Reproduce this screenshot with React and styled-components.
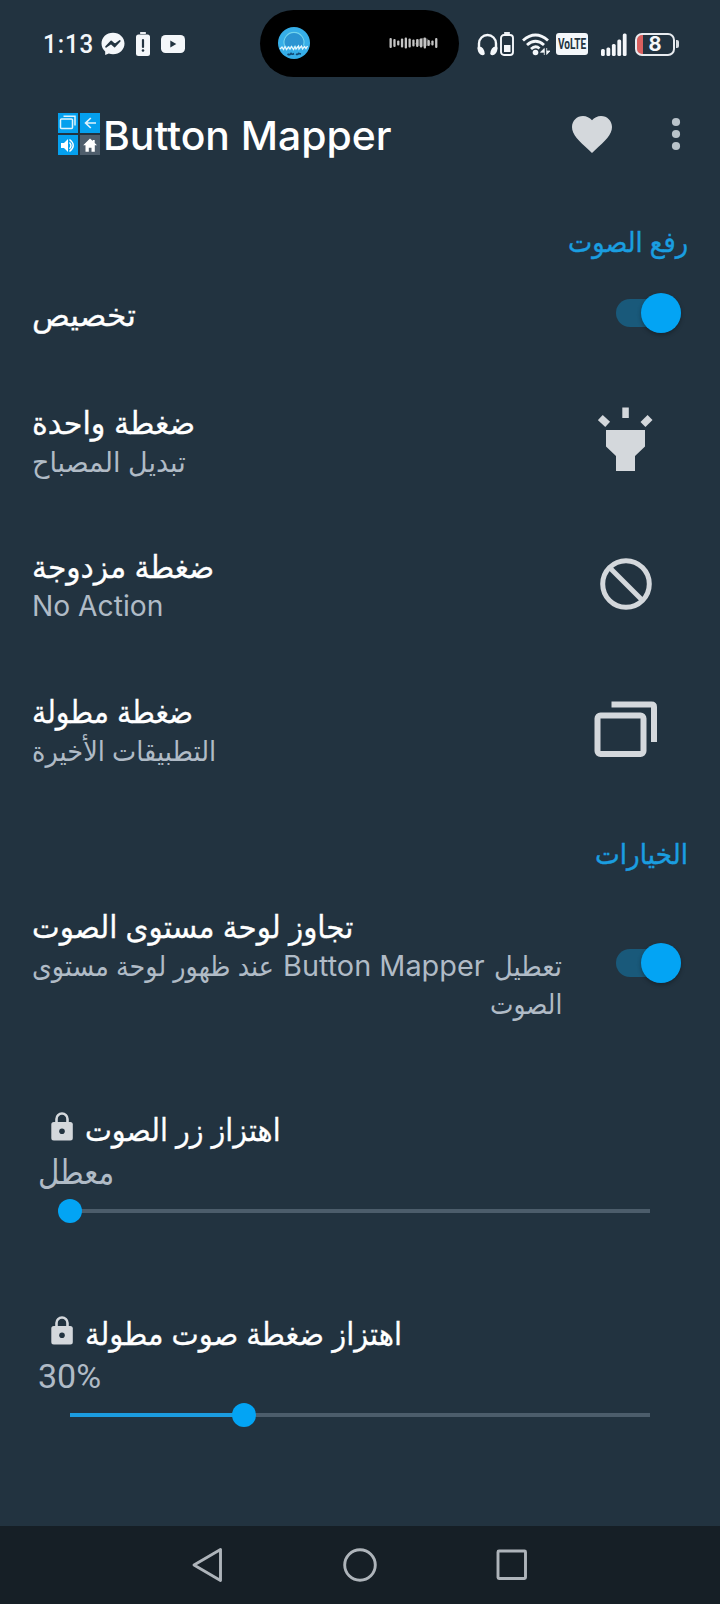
import React, { useLayoutEffect, useRef } from "react";
import styled, { createGlobalStyle } from "styled-components";

const BLUE = "#03a4f4";
const SOFT = "#d4d8dc";
const BACK = "#223340";

const GlobalStyle = createGlobalStyle`
  * { box-sizing: border-box; }
  body { margin: 0; background: ${BACK}; }
  svg { display: block; flex: none; }
`;

const Screen = styled.div`
  width: 720px;
  height: 1604px;
  display: flex;
  flex-direction: column;
  overflow: hidden;
  background: ${BACK};
  color: #fff;
  font-family: Inter, "DejaVu Sans", sans-serif;
`;

/* ---------- text that fills a given width ---------- */

const FitBox = styled.span`
  display: block;
  width: ${(p) => p.$width}px;
  direction: ltr;
  white-space: nowrap;
`;

const FitText = styled.span`
  display: inline-block;
  vertical-align: top;
  direction: ${(p) => (p.$rtl ? "rtl" : "ltr")};
  transform-origin: 0 50%;
`;

function Fit({ width, rtl, children }) {
  const ref = useRef(null);
  useLayoutEffect(() => {
    const el = ref.current;
    el.style.transform = `scaleX(${width / el.offsetWidth})`;
  }, [width, children]);
  return (
    <FitBox $width={width}>
      <FitText ref={ref} $rtl={rtl}>{children}</FitText>
    </FitBox>
  );
}

/* ---------- status bar ---------- */

const StatusBar = styled.header`
  height: 88px;
  flex: none;
  display: flex;
  align-items: center;
  padding-left: 43px;
  color: #f4f7fa;
`;

const Clock = styled.div`
  font: 500 26px/30px Roboto, sans-serif;
  letter-spacing: 1px;
  margin-right: 7px;
`;

const StatusLeft = styled.div`
  display: flex;
  align-items: center;
  width: 217px;
`;

const Island = styled.div`
  width: 199px;
  height: 67px;
  margin-bottom: 2px;
  border-radius: 34px;
  background: #000;
  display: flex;
  align-items: center;
  justify-content: space-between;
  padding: 0 21px 0 18px;
`;

const StatusRight = styled.div`
  display: flex;
  align-items: center;
  padding-left: 18px;
`;

const VolteBadge = styled.div`
  width: 32px;
  height: 22px;
  margin: 0 13px 0 6px;
  border-radius: 3px;
  background: #f4f7fa;
  color: ${BACK};
  padding-left: 2px;
  font: 700 14px/22px Roboto, sans-serif;
`;

const BatteryBody = styled.div`
  width: 40px;
  height: 23px;
  margin-left: 8px;
  border: 2px solid #e8ecf0;
  border-radius: 7px;
  background: linear-gradient(90deg, #d9605f 6px, transparent 6px);
  display: flex;
  justify-content: center;
  font: 700 20px/19px Inter, sans-serif;
`;

const BatteryTip = styled.div`
  width: 3px;
  height: 8px;
  margin-left: 1px;
  border-radius: 0 2px 2px 0;
  background: #d9dee3;
`;

const Messenger = () => (
  <svg width="24" height="24" viewBox="0 0 24 24">
    <path d="M12 .7C5.400.7.5 5.400.5 11.600c0 3.300 1.400 6 3.700 8v3.500l3.600-1.500c1.300.4 2.700.7 4.200.7 6.600 0 11.500-4.600 11.500-10.700S18.600.7 12 .7z" fill="#f4f7fa" />
    <path d="M5 14.800l5.200-5.500 3.600 3.300 5-3.600-5.100 5.500-3.600-3.200z" fill={BACK} stroke={BACK} strokeWidth="1.700" strokeLinejoin="round" />
  </svg>
);

const BatteryAlert = () => (
  <svg width="25" height="24" viewBox="-11 0 25 24">
    <rect x="4" y="0" width="6" height="2" rx=".7" fill="#e8ecf0" />
    <rect x="0" y="2.500" width="14" height="21.500" rx="2.500" fill="#f4f7fa" />
    <path d="M7 8v7" stroke={BACK} strokeWidth="2.200" strokeLinecap="round" />
    <circle cx="7" cy="18.500" r="1.300" fill={BACK} />
  </svg>
);

const Youtube = () => (
  <svg width="35" height="18" viewBox="-11 0 35 18">
    <rect width="24" height="18" rx="4.500" fill="#f4f7fa" />
    <path d="M9.300 5.500v7l6-3.500z" fill={BACK} />
  </svg>
);

const Cover = () => (
  <svg width="32" height="32" viewBox="0 0 32 32">
    <circle cx="16" cy="16" r="16" fill="#36aee8" />
    <path d="M7 19a10 10 0 1 1 18 0z" fill="#2b94d2" />
    <path d="M6.500 18.500a10 10 0 1 1 19 0" fill="none" stroke="#72d4ed" strokeWidth="1.100" />
    <path d="M2 22l2-2 1.500 2.500L7 19.500l1.500 3 2-2.500 1.500 2 1.500-2.500 2 3 1.500-3 1 2.500 2.500-3 .5 3 2.500-3 1 3 2-2.500 1.500 2 1.500-2.500" fill="none" stroke="#e5f6fd" strokeWidth="1.300" />
    <path d="M9.500 27q2 1.500 3.500-.5 1 1.500 3 0M18 27q1.500 1 2.500-.5l2.500.5" fill="none" stroke="#124a75" strokeWidth="1.600" />
  </svg>
);

const BARS = [10, 8, 5, 9, 11, 9, 7, 8, 9, 11, 6, 5, 10];
const Waveform = () => (
  <svg width="49" height="14" viewBox="0 0 49 14">
    <path d="M26 8q5-9 13-5l3 5q-8 5-16 0z" fill="#555" />
    {BARS.map((h, i) => (
      <rect key={i} x={0.5 + i * 3.8} y={7 - h / 2} width="2.300" height={h} rx="1" fill="#c4c4c4" />
    ))}
  </svg>
);

const Headphones = () => (
  <svg width="21" height="23" viewBox="0 0 21 23">
    <path d="M2 16V10.500a8.500 8.500 0 0 1 17 0V16" fill="none" stroke="#f4f7fa" strokeWidth="2.400" />
    <path d="M1 13.500q6-1 6.800 7.500-1.500 2-4 .8Q.5 19.500.5 15zM20 13.500q-6-1-6.800 7.500 1.500 2 4 .8 3.300-2.300 3.300-6.800z" fill="#f4f7fa" />
  </svg>
);

const BatteryHalf = () => (
  <svg width="16" height="24" viewBox="-2 0 16 24">
    <rect x="4" y="0" width="6" height="2" rx=".7" fill="#e8ecf0" />
    <rect x="1" y="3" width="12" height="20" rx="3" fill="none" stroke="#f4f7fa" strokeWidth="1.900" />
    <rect x="4" y="13" width="6.500" height="7" fill="#f4f7fa" />
  </svg>
);

const Wifi = () => (
  <svg width="36" height="23" viewBox="-8 0 36 23">
    <g fill="none" stroke="#f4f7fa" strokeWidth="2.900">
      <path d="M1 7.500q12.500-11 25 0M5 12q8.500-7.500 17 0M9 16q4.500-4 8.500-.5" />
    </g>
    <circle cx="13.500" cy="19.500" r="2.800" fill="#f4f7fa" />
    <path d="M22.300 22V15.500l-3.800 3.700h3.800M24.700 15v6.500l3.300-3.500h-3.300" fill="#f4f7fa" stroke="#f4f7fa" strokeWidth=".8" />
  </svg>
);

const Signal = () => (
  <svg width="26" height="23" viewBox="0 0 26 23">
    {[7, 8.500, 12, 16.500, 22.500].map((h, i) => (
      <rect key={i} x={i * 5.450} y={23 - h} width="3.800" height={h} rx="1.500" fill="#f4f7fa" />
    ))}
  </svg>
);

/* ---------- toolbar ---------- */

const Toolbar = styled.div`
  height: 92px;
  flex: none;
  display: flex;
  align-items: center;
  padding: 0 39px 0 58px;
`;

const Title = styled.h1`
  margin: 0 auto 0 3px;
  padding-top: 3px;
  font-size: 40px;
  line-height: 52px;
  font-weight: 450;
`;

const Logo = () => (
  <svg width="42" height="42" viewBox="0 0 42 42">
    <g fill="#05a0ee">
      <rect width="20" height="20" />
      <rect x="22" width="20" height="20" />
      <rect y="22" width="20" height="20" />
    </g>
    <rect x="22" y="22" width="20" height="20" fill="#4e5d6b" />
    <g fill="none" stroke="#dff3fd" strokeWidth="1.500">
      <rect x="2.500" y="6" width="12" height="9.500" rx="1" />
      <path d="M5.500 3.300H17V12.500" />
      <path d="M38 10H28M32.800 5L27.600 10l5.200 5" strokeWidth="1.700" />
    </g>
    <path d="M3 30v5h3l4 4V26l-4 4z" fill="#fff" />
    <path d="M11.500 29.500q3 3 0 6.200M11.500 26.500q7.500 5.800 0 12" fill="none" stroke="#fff" strokeWidth="1.400" />
    <path d="M32 25.500l-6.800 6.700h2.300v6.500h3.300v-4h2.700v4h3.300v-6.500H39l-2.300-2.300v-2.900h-1.900v1z" fill="#fff" />
  </svg>
);

const Heart = () => (
  <svg width="40" height="37" viewBox="2 3 20 18.350" preserveAspectRatio="none">
    <path d="M12 21.350l-1.450-1.320C5.400 15.360 2 12.280 2 8.500 2 5.420 4.420 3 7.500 3c1.740 0 3.410.81 4.500 2.090C13.090 3.810 14.760 3 16.500 3 19.580 3 22 5.420 22 8.500c0 3.780-3.400 6.860-8.550 11.540L12 21.350z" fill={SOFT} />
  </svg>
);

const MoreDots = () => (
  <svg width="69" height="34" viewBox="-59 0 69 34">
    {[5, 17, 29].map((y) => <circle key={y} cx="5" cy={y} r="4.100" fill="#b9c3ca" />)}
  </svg>
);

/* ---------- settings list ---------- */

const SectionHeader = styled.h2`
  margin: 0;
  flex: none;
  height: ${(p) => p.$height}px;
  padding: ${(p) => p.$top}px 32px 0 0;
  display: flex;
  justify-content: flex-end;
  font-size: 28px;
  line-height: 40px;
  font-weight: 400;
  color: #1a9ee0;
  -webkit-text-stroke: 0.4px #1a9ee0;
`;

const Row = styled.div`
  flex: none;
  height: ${(p) => p.$height}px;
  padding-left: 32px;
  display: flex;
  align-items: center;
  justify-content: space-between;
`;

const Labels = styled.div`
  padding-top: ${(p) => p.$shift || 0}px;
`;

const RowTitle = styled.div`
  font-size: 31px;
  line-height: 41px;
  -webkit-text-stroke: 0.3px #fff;
`;

const RowNote = styled.div`
  display: flex;
  direction: ${(p) => (p.$end ? "rtl" : "ltr")};
  gap: 9px;
  font-size: 28px;
  line-height: 38px;
  color: #b0bbc6;
`;

const IconSlot = styled.div`
  width: 188px;
  display: flex;
  justify-content: center;
`;

const Switch = styled.div`
  width: 65px;
  height: 28px;
  margin-right: 39px;
  border-radius: 14px;
  background: #19597a;
  display: flex;
  align-items: center;
  justify-content: flex-end;
`;

const Knob = styled.div`
  flex: none;
  width: 40px;
  height: 40px;
  border-radius: 50%;
  background: ${BLUE};
  box-shadow: 0 2px 4px rgba(0, 0, 0, 0.3);
`;

const Flashlight = () => (
  <svg width="56" height="66" viewBox="598 405.500 56 66">
    <g fill={SOFT}>
      <path d="M606 429.500h39V446l-10 9.500V470.500h-19V455.500L606 446z" />
      <rect x="622.300" y="407" width="6.500" height="10.500" />
      <rect x="-5" y="-3.500" width="10" height="7" transform="translate(604 420.500) rotate(43)" />
      <rect x="-5" y="-3.500" width="10" height="7" transform="translate(646.500 420.500) rotate(-45)" />
    </g>
  </svg>
);

const Block = () => (
  <svg width="52" height="52" viewBox="0 0 52 52">
    <g fill="none" stroke={SOFT} strokeWidth="5">
      <circle cx="26" cy="26" r="23.300" />
      <path d="M9.500 9.500L42.500 42.500" />
    </g>
  </svg>
);

const Recents = () => (
  <svg width="64" height="56" viewBox="0 0 64 56">
    <g fill="none" stroke={SOFT} strokeWidth="6">
      <rect x="3.500" y="14.500" width="46" height="38.500" rx="3" />
      <path d="M17.500 3.500H57.500Q60 3.500 60 6V41" />
    </g>
  </svg>
);

/* ---------- sliders ---------- */

const SliderRow = styled.div`
  flex: none;
  height: 204px;
  padding: 54px 70px 0 38px;
`;

const SliderTitle = styled.div`
  display: flex;
  gap: 11px;
  padding-left: 12px;
  font-size: 31px;
  line-height: 41px;
  -webkit-text-stroke: 0.3px #fff;
`;

const SliderValue = styled.div`
  padding-top: 1px;
  font-family: Roboto, "DejaVu Sans", sans-serif;
  font-size: 34px;
  line-height: 42px;
  color: #b0bbc6;
`;

const Track = styled.div`
  height: 4px;
  margin: 16px 0 0 32px;
  display: flex;
  align-items: center;
  background: #4c5d6b;
`;

const Fill = styled.div`
  height: 4px;
  background: #1b9ce0;
`;

const Thumb = styled.div`
  flex: none;
  width: 24px;
  height: 24px;
  margin-left: -12px;
  border-radius: 50%;
  background: ${BLUE};
`;

const Lock = () => (
  <svg width="24" height="33" viewBox="0 -1.500 24 33">
    <path d="M6.500 13V8.500a5.500 5.500 0 0 1 11 0V13" fill="none" stroke={SOFT} strokeWidth="2.600" />
    <rect x="1.300" y="11.500" width="21.500" height="18.500" rx="2.500" fill={SOFT} />
    <circle cx="12" cy="20.700" r="2.800" fill={BACK} />
  </svg>
);

/* ---------- navigation bar ---------- */

const NavBar = styled.nav`
  height: 78px;
  margin-top: auto;
  flex: none;
  display: flex;
  align-items: center;
  justify-content: center;
  gap: 118px;
  background: #161f26;
`;

const NavIcon = ({ children }) => (
  <svg width="34" height="36" viewBox="0 0 34 36" fill="none" stroke="#aeb4ba" strokeWidth="2.900" strokeLinejoin="round">
    {children}
  </svg>
);

const ACTIONS = [
  { title: "ضغطة واحدة", tw: 163, note: "تبديل المصباح", nw: 154, rtl: true, height: 144, Icon: Flashlight },
  { title: "ضغطة مزدوجة", tw: 182, note: "No Action", nw: 131, rtl: false, height: 145, Icon: Block },
  { title: "ضغطة مطولة", tw: 161, note: "التطبيقات الأخيرة", nw: 184, rtl: true, height: 145, Icon: Recents },
];

function SliderSetting({ title, titleWidth, value, valueWidth, rtl, percent }) {
  return (
    <SliderRow>
      <SliderTitle>
        <Lock />
        <Fit width={titleWidth} rtl>{title}</Fit>
      </SliderTitle>
      <SliderValue><Fit width={valueWidth} rtl={rtl}>{value}</Fit></SliderValue>
      <Track>
        <Fill style={{ width: `${percent}%` }} />
        <Thumb />
      </Track>
    </SliderRow>
  );
}

export default function App() {
  return (
    <Screen>
      <GlobalStyle />
      <StatusBar>
        <StatusLeft>
          <Clock><Fit width={51}>1:13</Fit></Clock>
          <Messenger />
          <BatteryAlert />
          <Youtube />
        </StatusLeft>
        <Island>
          <Cover />
          <Waveform />
        </Island>
        <StatusRight>
          <Headphones />
          <BatteryHalf />
          <Wifi />
          <VolteBadge><Fit width={28}>VoLTE</Fit></VolteBadge>
          <Signal />
          <BatteryBody>8</BatteryBody>
          <BatteryTip />
        </StatusRight>
      </StatusBar>

      <Toolbar>
        <Logo />
        <Title><Fit width={289}>Button Mapper</Fit></Title>
        <Heart />
        <MoreDots />
      </Toolbar>

      <SectionHeader $height={79} $top={42}><Fit width={120} rtl>رفع الصوت</Fit></SectionHeader>
      <Row $height={108}>
        <Labels $shift={3}>
          <RowTitle><Fit width={104} rtl>تخصيص</Fit></RowTitle>
        </Labels>
        <Switch><Knob /></Switch>
      </Row>
      {ACTIONS.map(({ title, tw, note, nw, rtl, height, Icon }) => (
        <Row key={title} $height={height}>
          <Labels $shift={4}>
            <RowTitle><Fit width={tw} rtl>{title}</Fit></RowTitle>
            <RowNote><Fit width={nw} rtl={rtl}>{note}</Fit></RowNote>
          </Labels>
          <IconSlot><Icon /></IconSlot>
        </Row>
      ))}

      <SectionHeader $height={70} $top={33}><Fit width={93} rtl>الخيارات</Fit></SectionHeader>
      <Row $height={184}>
        <Labels $shift={2}>
          <RowTitle><Fit width={321} rtl>تجاوز لوحة مستوى الصوت</Fit></RowTitle>
          <RowNote $end>
            <Fit width={68} rtl>تعطيل</Fit>
            <Fit width={202}>Button Mapper</Fit>
            <Fit width={242} rtl>عند ظهور لوحة مستوى</Fit>
          </RowNote>
          <RowNote $end><Fit width={72} rtl>الصوت</Fit></RowNote>
        </Labels>
        <Switch><Knob /></Switch>
      </Row>

      <SliderSetting title="اهتزاز زر الصوت" titleWidth={196} value="معطل" valueWidth={76} rtl percent={0} />
      <SliderSetting title="اهتزاز ضغطة صوت مطولة" titleWidth={317} value="30%" valueWidth={63} percent={30} />

      <NavBar>
        <NavIcon><path d="M3 18L29.500 2.500V33.500z" /></NavIcon>
        <NavIcon><circle cx="17" cy="18" r="15.300" /></NavIcon>
        <NavIcon><rect x="3" y="4" width="27.500" height="27.500" rx="1" /></NavIcon>
      </NavBar>
    </Screen>
  );
}
